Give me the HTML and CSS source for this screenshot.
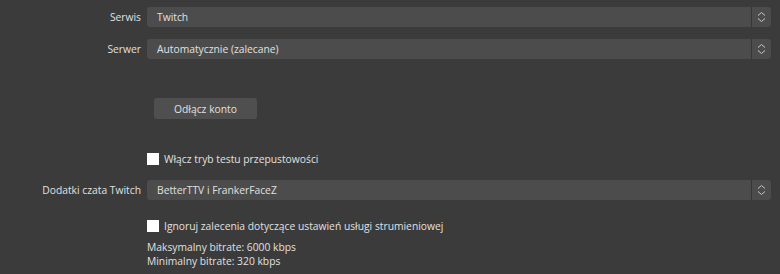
FILE: index.html
```html
<!DOCTYPE html>
<html lang="pl">

<head>
    <meta charset="UTF-8" />
    <meta name="viewport" content="width=device-width, initial-scale=1.0" />
    <title>Ustawienia transmisji</title>
    <link rel="stylesheet" href="styles.css">
</head>

<body>
    <div class="form">
        <div class="row row-service">
            <label class="label">Serwis</label>
            <div class="combo">
                <span class="combo-text">Twitch</span>
                <span class="combo-arrows">
                    <svg width="9" height="12" viewBox="0 0 9 12">
                        <path d="M1 4.5 L4.5 1.5 L8 4.5 M1 7.5 L4.5 10.5 L8 7.5" fill="none" stroke="#c8c8c8" stroke-width="1" />
                    </svg>
                </span>
            </div>
        </div>

        <div class="row row-server">
            <label class="label">Serwer</label>
            <div class="combo">
                <span class="combo-text">Automatycznie (zalecane)</span>
                <span class="combo-arrows">
                    <svg width="9" height="12" viewBox="0 0 9 12">
                        <path d="M1 4.5 L4.5 1.5 L8 4.5 M1 7.5 L4.5 10.5 L8 7.5" fill="none" stroke="#c8c8c8" stroke-width="1" />
                    </svg>
                </span>
            </div>
        </div>

        <div class="row row-button">
            <span class="label"></span>
            <button class="btn">Odłącz konto</button>
        </div>

        <div class="row row-check1">
            <span class="label"></span>
            <label class="check"><span class="box"></span>Włącz tryb testu przepustowości</label>
        </div>

        <div class="row row-chat">
            <label class="label">Dodatki czata Twitch</label>
            <div class="combo">
                <span class="combo-text">BetterTTV i FrankerFaceZ</span>
                <span class="combo-arrows">
                    <svg width="9" height="12" viewBox="0 0 9 12">
                        <path d="M1 4.5 L4.5 1.5 L8 4.5 M1 7.5 L4.5 10.5 L8 7.5" fill="none" stroke="#c8c8c8" stroke-width="1" />
                    </svg>
                </span>
            </div>
        </div>

        <div class="row row-check2">
            <span class="label"></span>
            <label class="check"><span class="box"></span>Ignoruj zalecenia dotyczące ustawień usługi strumieniowej</label>
        </div>

        <div class="row row-info">
            <span class="label"></span>
            <div class="info">
                <div>Maksymalny bitrate: 6000 kbps</div>
                <div>Minimalny bitrate: 320 kbps</div>
            </div>
        </div>
    </div>
</body>

</html>
```

FILE: styles.css
```css
:root {
    --background: #3b3b3b;
    --field: #4c4c4c;
    --button: #4f4f4f;
    --text: #e0e0e0;
}

* {
    box-sizing: border-box;
}

body {
    margin: 0;
    background: var(--background);
    color: var(--text);
    font-family: 'Open Sans', 'Noto Sans', sans-serif;
    font-size: 10.3px;
}

.form {
    padding: 0 9px 0 0;
}

.row {
    display: flex;
    align-items: center;
    gap: 6px;
}

.label {
    flex: 0 0 141px;
    text-align: right;
}

.row-service {
    margin-top: 7px;
}

.row-server {
    margin-top: 12px;
}

.row-button {
    margin-top: 39px;
}

.row-check1 {
    margin-top: 32px;
}

.row-chat {
    margin-top: 13px;
}

.row-check2 {
    margin-top: 18px;
}

.row-info {
    margin-top: 6px;
}

.combo {
    flex: 1;
    height: 20px;
    display: flex;
    align-items: center;
    background: var(--field);
    border-radius: 3px;
}

.combo-text {
    flex: 1;
    padding-left: 10px;
}

.combo-arrows {
    width: 20px;
    height: 20px;
    display: flex;
    align-items: center;
    justify-content: center;
    border-left: 1px solid #363636;
}

.btn {
    margin-left: 7px;
    width: 103px;
    height: 21px;
    padding: 0;
    border: none;
    border-radius: 3px;
    background: var(--button);
    color: var(--text);
    font: inherit;
}

.check {
    display: flex;
    align-items: center;
    height: 16px;
    gap: 5px;
}

.box {
    width: 12px;
    height: 12px;
    background: #ffffff;
}

.info {
    line-height: 14px;
}
```
